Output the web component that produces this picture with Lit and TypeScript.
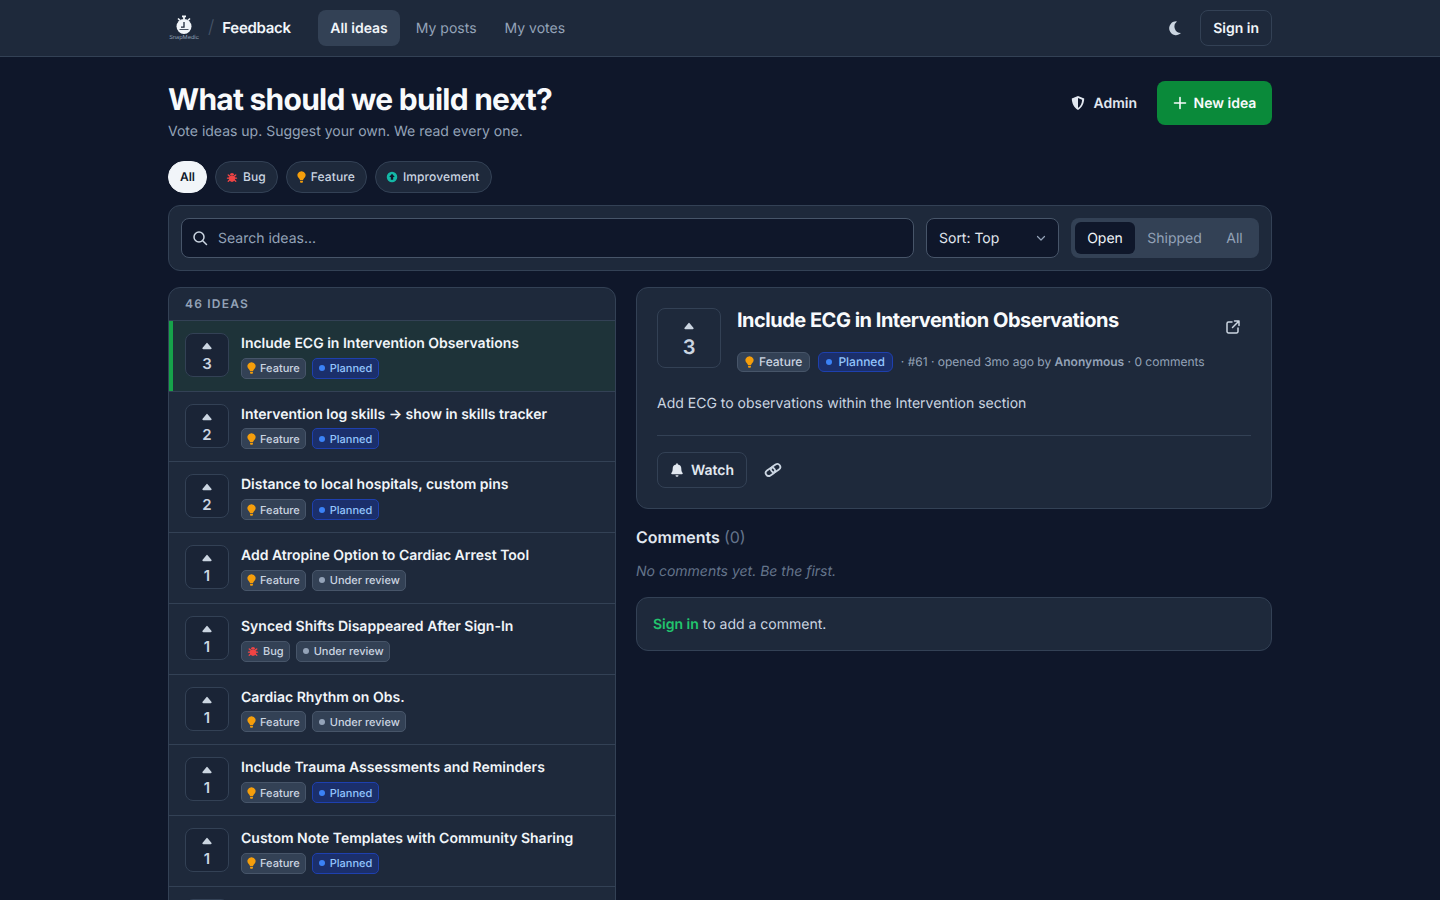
import { LitElement, css, html, svg } from "lit";
import { customElement } from "lit/decorators.js";

type Kind = "Feature" | "Bug";
type Status = "Planned" | "Under review";

const ideas: { votes: number; title: string; kind: Kind; status: Status }[] = [
  { votes: 3, title: "Include ECG in Intervention Observations", kind: "Feature", status: "Planned" },
  { votes: 2, title: "Intervention log skills → show in skills tracker", kind: "Feature", status: "Planned" },
  { votes: 2, title: "Distance to local hospitals, custom pins", kind: "Feature", status: "Planned" },
  { votes: 1, title: "Add Atropine Option to Cardiac Arrest Tool", kind: "Feature", status: "Under review" },
  { votes: 1, title: "Synced Shifts Disappeared After Sign-In", kind: "Bug", status: "Under review" },
  { votes: 1, title: "Cardiac Rhythm on Obs.", kind: "Feature", status: "Under review" },
  { votes: 1, title: "Include Trauma Assessments and Reminders", kind: "Feature", status: "Planned" },
  { votes: 1, title: "Custom Note Templates with Community Sharing", kind: "Feature", status: "Planned" },
];

const bulb = svg`<path fill="#f59e0b" d="M8 1.200a4.500 4.500 0 0 0-2.900 8c.7.600 1.100 1.300 1.200 2.200h3.400c.1-.9.500-1.600 1.200-2.200a4.500 4.500 0 0 0-2.900-8z"/><path fill="#f59e0b" d="M6.400 12.200h3.200v.8c0 .7-.5 1.300-1.200 1.300h-.8c-.7 0-1.200-.6-1.200-1.300z"/>`;
const bug = svg`<g fill="#ef4444"><path d="M8 5.500c2.600 0 4.300 1.600 4.300 4.200 0 2.700-1.900 4.800-4.300 4.800s-4.300-2.100-4.300-4.800c0-2.600 1.700-4.200 4.300-4.200z"/><path d="M5.200 5.300a2.800 2.800 0 0 1 5.600 0z"/></g><path stroke="#ef4444" stroke-width="1.800" stroke-linecap="round" fill="none" d="M4.500 6.500 3 5.200M11.500 6.500 13 5.200M3.800 9.500H2M12.200 9.500H14M4.500 12.300 3 13.600M11.500 12.300 13 13.600"/>`;
const improve = svg`<circle cx="8" cy="8" r="7" fill="#14b8a6"/><path fill="#0f172a" d="M8 3.600 11.700 8H9.600v3.800H6.400V8H4.300z"/>`;
const caret = svg`<path fill="currentColor" d="M6.200 1.400a1 1 0 0 1 1.600 0l3.600 4.400c.5.600.1 1.400-.7 1.400H3.300c-.8 0-1.200-.8-.7-1.400z"/>`;

@customElement("app-root")
export class AppRoot extends LitElement {
  static styles = css`
    :host {
      display: block;
      height: 900px;
      overflow: hidden;
      background: #0f172a;
      color: #f1f5f9;
      font-family: Inter, "Liberation Sans", sans-serif;
      font-size: 14px;
      text-rendering: geometricPrecision;
    }
    svg { display: block; flex: none; }

    .nav { height: 56px; background: #1e293b; border-bottom: 1px solid #334155; }
    .nav-in, .main { width: 1104px; margin: 0 auto; }
    .nav-in { height: 56px; display: flex; align-items: center; }
    .logo { width: 32px; display: flex; flex-direction: column; align-items: center; color: #f1f5f9; }
    .logo span { font-size: 5.600px; line-height: 6px; color: #94a3b8; white-space: nowrap; }
    .slash { color: #475569; font-size: 18px; margin: 0 8px 2px 8px; font-weight: 300; }
    .brand { font-size: 15px; font-weight: 600; letter-spacing: -0.300px; margin-right: 27.500px; padding-bottom: 1px; }
    .tab { height: 36px; box-sizing: border-box; padding: 0 12px; margin-right: 4px; display: flex; align-items: center; border-radius: 8px; color: #94a3b8; }
    .tab.on { background: #334155; color: #f1f5f9; font-weight: 600; }
    .spacer { flex: 1; }
    .moon { color: #cbd5e1; margin-right: 17px; }
    .signin { height: 36px; box-sizing: border-box; padding: 0 12px; display: flex; align-items: center; border: 1px solid #334155; border-radius: 8px; font-weight: 600; }

    .head { display: flex; justify-content: space-between; align-items: flex-start; padding-top: 24px; height: 60px; }
    h1 { margin: 0; padding-top: 1px; font-size: 30px; line-height: 36px; font-weight: 700; letter-spacing: -0.750px; color: #f8fafc; }
    .sub { color: #94a3b8; line-height: 20px; margin-top: 4px; }
    .head-act { display: flex; align-items: center; gap: 20px; }
    .admin { display: flex; align-items: center; gap: 7px; font-weight: 600; color: #e2e8f0; }
    .new { height: 44px; width: 115px; box-sizing: border-box; display: flex; align-items: center; justify-content: center; gap: 7px; background: #0a8a3a; border-radius: 8px; font-weight: 600; color: #f8fafc; }

    .chips { display: flex; gap: 8px; margin-top: 20px; }
    .chip { height: 32px; box-sizing: border-box; padding: 0 11px 1px 10px; display: flex; align-items: center; gap: 5px; border: 1px solid #334155; background: #1e293b; border-radius: 16px; font-size: 12px; font-weight: 500; letter-spacing: 0.100px; color: #cbd5e1; }
    .chip.on { background: #f1f5f9; color: #0f172a; border-color: #f1f5f9; font-weight: 600; letter-spacing: 0; padding: 0 11px 1px; }

    .filters { margin-top: 12px; height: 66px; box-sizing: border-box; padding: 12px; display: flex; align-items: center; gap: 12px; background: #1e293b; border: 1px solid #334155; border-radius: 12px; }
    .search { flex: 1; height: 40px; box-sizing: border-box; display: flex; align-items: center; gap: 10px; padding: 0 10px; background: #0f172a; border: 1px solid #475569; border-radius: 8px; color: #94a3b8; }
    .sort { width: 133px; height: 40px; box-sizing: border-box; display: flex; align-items: center; justify-content: space-between; padding: 0 11px 0 12px; background: #0f172a; border: 1px solid #475569; border-radius: 8px; color: #e2e8f0; }
    .sort svg { color: #94a3b8; }
    .seg { height: 40px; width: 188px; box-sizing: border-box; padding: 4px; display: flex; background: #334155; border-radius: 8px; }
    .seg div { display: flex; align-items: center; justify-content: center; border-radius: 6px; color: #94a3b8; box-sizing: border-box; }
    .seg .on { width: 60px; background: #0f172a; color: #f1f5f9; }
    .seg .s { width: 79px; }
    .seg .a { width: 41px; }

    .cols { display: grid; grid-template-columns: 448px 636px; gap: 20px; margin-top: 16px; align-items: start; }
    .list { background: #1e293b; border: 1px solid #334155; border-radius: 12px; overflow: hidden; }
    .count { height: 32.750px; box-sizing: border-box; padding: 0 16px; display: flex; align-items: center; font-size: 12px; font-weight: 600; letter-spacing: 1.200px; color: #94a3b8; border-bottom: 1px solid #334155; }
    .row { display: flex; gap: 12px; height: 70.750px; box-sizing: border-box; padding: 12px 16px; border-bottom: 1px solid #334155; }
    .row.on { background: #1e3339; box-shadow: inset 4px 0 0 #16a34a; }
    .vote { width: 44px; height: 44px; box-sizing: border-box; flex: none; display: flex; flex-direction: column; align-items: center; justify-content: center; padding-top: 5px; border: 1px solid #334155; background: #1a2436; border-radius: 8px; color: #cbd5e1; font-size: 15px; font-weight: 600; line-height: 18px; }
    .vote svg { margin-bottom: 4px; }
    .t { font-weight: 600; padding-top: 1px; line-height: 20px; color: #f1f5f9; white-space: nowrap; margin-bottom: 3.750px; }
    .badges { display: flex; gap: 6px; align-items: center; }
    .badge { height: 21px; box-sizing: border-box; padding: 0 5px; display: flex; align-items: center; gap: 4px; border-radius: 5px; font-size: 11px; font-weight: 500; white-space: nowrap; border: 1px solid #475569; background: #334155; color: #cbd5e1; }
    .badge.planned { background: #1b2f6b; border-color: #1e40af; color: #93c5fd; padding-right: 6px; }
    .dot { width: 6px; height: 6px; border-radius: 50%; background: #3b82f6; margin: 0 1px; }
    .review .dot { background: #94a3b8; }

    .card { background: #1e293b; border: 1px solid #334155; border-radius: 12px; padding: 20px; }
    .d-top { display: flex; gap: 16px; }
    .d-vote { width: 64px; height: 60px; box-sizing: border-box; flex: none; display: flex; flex-direction: column; align-items: center; justify-content: center; padding-top: 5px; border: 1px solid #334155; border-radius: 8px; color: #cbd5e1; font-size: 20px; font-weight: 600; line-height: 26px; }
    .d-vote svg { margin-bottom: 3px; }
    .d-body { flex: 1; min-width: 0; }
    .d-head { display: flex; justify-content: space-between; }
    h2 { margin: 0; font-size: 20px; line-height: 24px; font-weight: 700; letter-spacing: -0.500px; color: #f8fafc; white-space: nowrap; }
    .ext { color: #cbd5e1; margin: 11px 10px 0 0; }
    .meta { display: flex; align-items: center; gap: 8px; margin-top: 17px; }
    .meta .badge { height: 20px; padding: 0 7px 1px; gap: 5px; font-size: 12px; border-radius: 6px; }
    .meta .badge .dot { margin: 1px 1px 0 0; }
    .meta .badge svg { margin-top: 1px; }
    .meta .m { font-size: 12px; color: #94a3b8; padding-bottom: 1px; }
    .meta b { font-weight: 600; color: #94a3b8; }
    .text { margin: 22px 0 0; line-height: 20px; color: #cbd5e1; }
    .sep { height: 1px; background: #334155; margin-top: 21px; }
    .acts { display: flex; align-items: center; gap: 17px; margin-top: 16px; }
    .watch { width: 90px; height: 36px; box-sizing: border-box; display: flex; align-items: center; justify-content: center; gap: 7px; border: 1px solid #334155; border-radius: 8px; font-weight: 600; color: #e2e8f0; }
    .link { color: #cbd5e1; }

    .c-h { margin-top: 16px; font-size: 16px; line-height: 24px; font-weight: 600; color: #e2e8f0; }
    .c-h span { color: #64748b; font-weight: 400; }
    .none { margin-top: 13px; line-height: 20px; font-style: italic; color: #64748b; }
    .cta { margin-top: 15px; height: 54px; box-sizing: border-box; padding: 0 16px; display: flex; align-items: center; background: #1e293b; border: 1px solid #334155; border-radius: 12px; color: #cbd5e1; white-space: pre; }
    .cta b { color: #22c56e; font-weight: 600; }
  `;

  kindIcon(kind: string) {
    if (kind === "Feature") return html`<svg width="9" height="12" viewBox="3 1 10 13.500">${bulb}</svg>`;
    const g = kind === "Bug" ? bug : improve;
    return html`<svg width="12" height="12" viewBox="0 0 16 16">${g}</svg>`;
  }

  badges(kind: string, status: string) {
    return html`
      <span class="badge">${this.kindIcon(kind)}${kind}</span>
      <span class="badge ${status === "Planned" ? "planned" : "review"}"><i class="dot"></i>${status}</span>
    `;
  }

  render() {
    return html`
      <div class="nav">
        <div class="nav-in">
          <div class="logo">
            <svg width="18" height="20" viewBox="0 0 18 20">
              <rect x="7" y="0.500" width="4" height="1.800" fill="currentColor" />
              <rect x="8.100" y="2" width="1.800" height="2.400" fill="currentColor" />
              <path d="M3 3.500 5 5.400M15 3.500 13 5.400" stroke="currentColor" stroke-width="1.500" />
              <circle cx="9" cy="11.500" r="7.500" fill="currentColor" />
              <path d="M9 7v5.200H6" fill="none" stroke="#1e293b" stroke-width="1.300" />
              <path d="M4.500 14.500h9" stroke="#1e293b" stroke-width="0.800" />
            </svg>
            <span>SnapMedic</span>
          </div>
          <span class="slash">/</span>
          <span class="brand">Feedback</span>
          <div class="tab on">All ideas</div>
          <div class="tab">My posts</div>
          <div class="tab">My votes</div>
          <div class="spacer"></div>
          <svg class="moon" width="16" height="16" viewBox="0 0 16 16">
            <path fill="currentColor" d="M9.900 1.400A6.900 6.900 0 1 0 14 13.100 6.600 6.600 0 0 1 9.900 1.400z" />
          </svg>
          <div class="signin">Sign in</div>
        </div>
      </div>

      <div class="main">
        <div class="head">
          <div>
            <h1>What should we build next?</h1>
            <div class="sub">Vote ideas up. Suggest your own. We read every one.</div>
          </div>
          <div class="head-act">
            <div class="admin">
              <svg width="16" height="16" viewBox="0 0 16 16">
                <path fill="currentColor" fill-rule="evenodd" d="M8 1 1.800 3.500C1.800 8 3.800 12.600 8 15c4.200-2.400 6.200-7 6.200-11.500zM8 3v10c2.700-1.800 4-5 4.100-8.300z" />
              </svg>
              Admin
            </div>
            <div class="new">
              <svg width="14" height="14" viewBox="0 0 14 14"><path d="M7 1.500v11M1.500 7h11" stroke="currentColor" stroke-width="1.600" stroke-linecap="round" /></svg>
              New idea
            </div>
          </div>
        </div>

        <div class="chips">
          <div class="chip on">All</div>
          <div class="chip">${this.kindIcon("Bug")}Bug</div>
          <div class="chip">${this.kindIcon("Feature")}Feature</div>
          <div class="chip">${this.kindIcon("Improvement")}Improvement</div>
        </div>

        <div class="filters">
          <div class="search">
            <svg width="16" height="16" viewBox="0 0 16 16" fill="none" stroke="#cbd5e1" stroke-width="1.500" stroke-linecap="round"><circle cx="7" cy="7" r="5" /><path d="m11 11 3.500 3.500" /></svg>
            Search ideas...
          </div>
          <div class="sort">
            Sort: Top
            <svg width="12" height="12" viewBox="0 0 12 12" fill="none" stroke="currentColor" stroke-width="1.200" stroke-linecap="round" stroke-linejoin="round"><path d="m2.500 4.500 3.500 3.500 3.500-3.500" /></svg>
          </div>
          <div class="seg">
            <div class="on">Open</div>
            <div class="s">Shipped</div>
            <div class="a">All</div>
          </div>
        </div>

        <div class="cols">
          <div class="list">
            <div class="count">46 IDEAS</div>
            ${ideas.map(
              (idea, i) => html`
                <div class="row ${i === 0 ? "on" : ""}">
                  <div class="vote">
                    <svg width="14" height="9" viewBox="0 0 14 9">${caret}</svg>
                    ${idea.votes}
                  </div>
                  <div>
                    <div class="t">${idea.title}</div>
                    <div class="badges">${this.badges(idea.kind, idea.status)}</div>
                  </div>
                </div>
              `
            )}
            <div class="row"><div class="vote"></div></div>
          </div>

          <div>
            <div class="card">
              <div class="d-top">
                <div class="d-vote">
                  <svg width="14" height="9" viewBox="0 0 14 9">${caret}</svg>
                  3
                </div>
                <div class="d-body">
                  <div class="d-head">
                    <h2>Include ECG in Intervention Observations</h2>
                    <svg class="ext" width="16" height="16" viewBox="0 0 16 16" fill="none" stroke="currentColor" stroke-width="1.500" stroke-linecap="round" stroke-linejoin="round">
                      <path d="M7 3H3.500A1.500 1.500 0 0 0 2 4.500v8A1.500 1.500 0 0 0 3.500 14h8a1.500 1.500 0 0 0 1.500-1.500V9" />
                      <path d="M9.500 2H14v4.500M14 2 7.500 8.500" />
                    </svg>
                  </div>
                  <div class="meta">
                    ${this.badges("Feature", "Planned")}
                    <span class="m">· #61 · opened 3mo ago by <b>Anonymous</b> · 0 comments</span>
                  </div>
                </div>
              </div>
              <p class="text">Add ECG to observations within the Intervention section</p>
              <div class="sep"></div>
              <div class="acts">
                <div class="watch">
                  <svg width="14" height="14" viewBox="0 0 14 14"><path fill="currentColor" d="M7 .3c-.5 0-.9.400-.9.900v.3A4.200 4.200 0 0 0 2.700 5.600c0 2.800-.7 3.700-1.300 4.400-.4.500-.1 1.200.6 1.200h10c.7 0 1-.7.600-1.200-.6-.7-1.300-1.600-1.300-4.400a4.200 4.200 0 0 0-3.400-4.100v-.3C7.900.700 7.500.3 7 .3zM5.500 12.200a1.500 1.500 0 0 0 3 0z" /></svg>
                  Watch
                </div>
                <svg class="link" width="18" height="18" viewBox="0 0 18 18" fill="none" stroke="currentColor" stroke-width="1.800">
                  <g transform="rotate(-35 9 9)">
                    <rect x="0.800" y="6" width="10" height="6" rx="3" />
                    <rect x="7.200" y="6" width="10" height="6" rx="3" />
                  </g>
                </svg>
              </div>
            </div>
            <div class="c-h">Comments <span>(0)</span></div>
            <div class="none">No comments yet. Be the first.</div>
            <div class="cta"><b>Sign in</b> to add a comment.</div>
          </div>
        </div>
      </div>
    `;
  }
}
